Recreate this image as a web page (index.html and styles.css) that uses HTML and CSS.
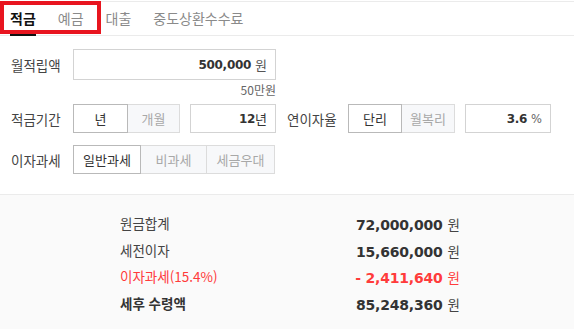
FILE: index.html
```html
<!DOCTYPE html>
<html lang="ko">
<head>
<meta charset="utf-8">
<title>적금 계산기</title>
<link rel="stylesheet" href="styles.css">
</head>
<body>
<div class="calc">
  <nav class="tabs">
    <span class="tab active">적금</span>
    <span class="tab">예금</span>
    <span class="tab">대출</span>
    <span class="tab">중도상환수수료</span>
  </nav>
  <div class="annot"></div>

  <div class="form">
    <div class="row">
      <span class="label">월적립액</span>
      <div class="field wide"><b class="num">500,000</b><span class="unit">원</span></div>
    </div>
    <div class="hint">50만원</div>

    <div class="row">
      <span class="label">적금기간</span>
      <div class="seg">
        <span class="opt on w55">년</span><span class="opt w52">개월</span>
      </div>
      <div class="field small"><b class="num">12</b><span class="unit tight">년</span></div>
      <span class="label label2">연이자율</span>
      <div class="seg">
        <span class="opt on w54">단리</span><span class="opt w53">월복리</span>
      </div>
      <div class="field small"><b class="num">3.6</b><span class="unit pct">%</span></div>
    </div>

    <div class="row">
      <span class="label">이자과세</span>
      <div class="seg">
        <span class="opt on w68">일반과세</span><span class="opt w66">비과세</span><span class="opt w68">세금우대</span>
      </div>
    </div>
  </div>

  <div class="result">
    <div class="rrow"><span class="rlabel">원금합계</span><span class="rval"><b>72,000,000</b><span class="won">원</span></span></div>
    <div class="rrow"><span class="rlabel">세전이자</span><span class="rval"><b>15,660,000</b><span class="won">원</span></span></div>
    <div class="rrow red"><span class="rlabel">이자과세(15.4%)</span><span class="rval"><b>- 2,411,640</b><span class="won">원</span></span></div>
    <div class="rrow total"><span class="rlabel">세후 수령액</span><span class="rval"><b>85,248,360</b><span class="won">원</span></span></div>
  </div>
</div>
</body>
</html>
```

FILE: styles.css
```css
* { box-sizing: border-box; }

html, body {
  margin: 0;
  padding: 0;
  background: #fff;
}

body {
  font-family: "Noto Sans CJK KR", "Noto Sans", sans-serif;
  color: #333;
  width: 574px;
  height: 329px;
  overflow: hidden;
}

.calc {
  position: relative;
  display: flex;
  flex-direction: column;
  height: 329px;
  padding-top: 1px;
}

.tabs {
  display: flex;
  flex: none;
  height: 35px;
  border-top: 1px solid #ebebeb;
  border-bottom: 1px solid #ebebeb;
  padding-left: 10px;
  gap: 22px;
}

.tab {
  font-size: 14px;
  line-height: 32px;
  color: #8a8a8a;
  white-space: nowrap;
}

.tab.active {
  color: #111;
  font-weight: 700;
  border-bottom: 2px solid #111;
  margin-bottom: -1px;
}

.annot {
  position: absolute;
  left: 0;
  top: 1px;
  width: 101px;
  height: 33px;
  border: 4px solid #e8151f;
  pointer-events: none;
}

.form {
  flex: none;
  padding: 13px 0 0 11px;
}

.row {
  display: flex;
  align-items: center;
}

.row + .hint + .row { margin-top: 7px; }
.row + .row { margin-top: 12px; }

.label {
  width: 62px;
  font-size: 13.5px;
  color: #444;
  white-space: nowrap;
}

.label2 {
  margin-left: 11px;
  width: 61px;
}

.field {
  display: flex;
  align-items: center;
  justify-content: flex-end;
  height: 30px;
  border: 1px solid #d3d3d3;
  padding-right: 8px;
  background: #fff;
}

.field.wide { width: 203px; height: 31px; }
.field.small { width: 86px; margin-left: 10px; height: 29px; }

.num {
  font-family: "DejaVu Sans", sans-serif;
  font-weight: 700;
  font-size: 12px;
  letter-spacing: -0.3px;
  color: #333;
}

.unit {
  font-size: 13px;
  color: #555;
  margin-left: 4px;
}

.unit.tight { margin-left: 0; color: #333; }
.unit.pct { font-family: "DejaVu Sans", sans-serif; font-size: 11.5px; color: #666; }

.hint {
  width: 265px;
  text-align: right;
  font-size: 12px;
  color: #666;
  line-height: 14px;
  margin-top: 3px;
}

.seg {
  display: flex;
  height: 29px;
}

.opt {
  display: flex;
  align-items: center;
  justify-content: center;
  font-size: 13px;
  color: #a8a8a8;
  background: #f7f8fa;
  border: 1px solid #dcdcdc;
  border-left: 0;
  white-space: nowrap;
}

.opt.on {
  color: #333;
  background: #fff;
  border: 1px solid #b9b9b9;
}

.w52 { width: 52px; }
.w53 { width: 53px; }
.w54 { width: 54px; }
.w55 { width: 55px; }
.w66 { width: 66px; }
.w68 { width: 68px; }

.result {
  flex: 1;
  margin-top: 20px;
  background: #fafafa;
  border-top: 1px solid #ebebeb;
  padding: 15px 0 0 120px;
}

.rrow {
  display: flex;
  justify-content: space-between;
  align-items: center;
  width: 340px;
  height: 26.6px;
}

.rlabel {
  font-size: 13.5px;
  color: #444;
}

.rval b {
  font-family: "DejaVu Sans", sans-serif;
  font-weight: 700;
  font-size: 14px;
  letter-spacing: -0.2px;
  color: #333;
}

.won {
  font-size: 13.5px;
  color: #444;
  margin-left: 5px;
}

.rrow.red .rlabel,
.rrow.red .rval b,
.rrow.red .won { color: #ff3b3b; }

.rrow.total .rlabel { font-weight: 700; color: #333; }
```
